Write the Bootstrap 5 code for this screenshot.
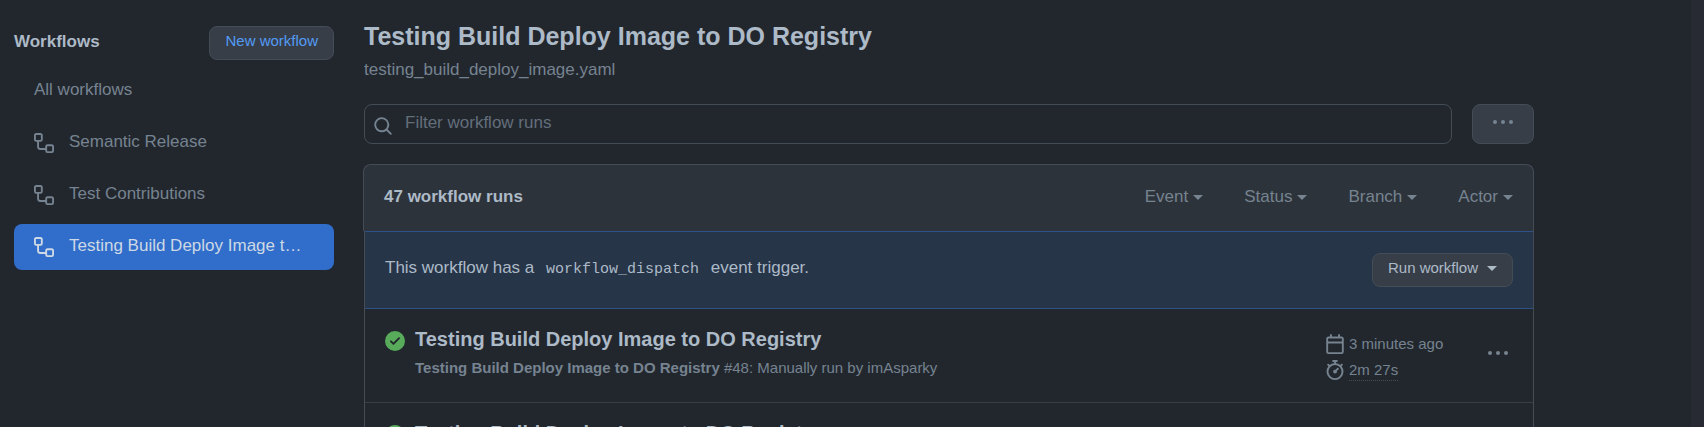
<!DOCTYPE html>
<html lang="en">
<head>
<meta charset="utf-8">
<meta name="viewport" content="width=device-width, initial-scale=1">
<title>Workflow runs</title>
<link href="https://cdn.jsdelivr.net/npm/bootstrap@5.3.0/dist/css/bootstrap.min.css" rel="stylesheet">
<style>
  :root { --canvas:#22272e; --fg:#adbac7; --muted:#768390; --line:#444c56; --raised:#373e47; }
  body { background:var(--canvas); color:var(--fg); font:17px/24px "Liberation Sans", Arial, sans-serif; }
  a { text-decoration:none; color:inherit; }
  svg { fill:currentColor; flex:none; display:block; }
  .page-shell { height:100vh; overflow:hidden; border-right:13px solid #272a32; padding-left:14px; gap:30px; }
  .side { width:320px; flex:none; padding-top:26px; }
  .side h2, .runs-head h2 { font-size:17px; line-height:24px; font-weight:700; margin:0; }
  .gh-btn { --bs-btn-bg:var(--raised); --bs-btn-border-color:var(--line); --bs-btn-color:var(--fg);
    --bs-btn-hover-bg:#444c56; --bs-btn-hover-color:var(--fg); --bs-btn-hover-border-color:#768390;
    --bs-btn-font-size:15px; --bs-btn-line-height:24px; --bs-btn-border-radius:8px;
    --bs-btn-padding-x:15px; padding-top:2px; padding-bottom:6px; }
  .gh-btn.new { --bs-btn-color:#539bf5; }
  .flow-nav { gap:6px; margin-top:8px; }
  .flow-nav .nav-link { color:var(--muted); display:flex; align-items:center; gap:15px; height:46px; padding:0 24px 0 20px; border-radius:8px; }
  .flow-nav .nav-link span { padding-bottom:2px; }
  .flow-nav .nav-link.active { background:#316dca; color:#cdd9e5; }
  .main-col { padding:21px 157px 0 0; min-width:0; }
  h1 { font-size:25px; line-height:30px; font-weight:700; margin:0; }
  .file { color:var(--muted); line-height:24px; margin-top:7px; }
  .tools { gap:20px; margin-top:22px; }
  .search-box { height:40px; border:1px solid var(--line); border-radius:8px; padding:0 10px 0 8px; gap:12px; }
  .search-box svg { color:var(--muted); margin-top:4px; }
  .search-box input { background:none; border:0; padding:0 0 2px; color:var(--fg); font-size:17px; line-height:24px; box-shadow:none; }
  .search-box input:focus { background:none; color:var(--fg); box-shadow:none; }
  .search-box input::placeholder { color:#636e7b; }
  .gh-btn.more { width:62px; height:40px; padding:0 0 4px; color:var(--muted); display:flex; align-items:center; justify-content:center; }
  .runs { margin-top:20px; }
  .runs-head { background:#2d333b; border:1px solid var(--line); border-bottom:0; border-radius:8px 8px 0 0; margin-left:-1px; height:67px; padding:0 20px; }
  .runs-head h2, .filters { padding-bottom:3px; }
  .filters { gap:41px; }
  .filters button { background:none; border:0; padding:0; color:var(--muted); }
  .caret::after { content:""; display:inline-block; margin-left:5px; vertical-align:2px; border:5px solid transparent; border-top-color:currentColor; border-bottom:0; }
  .gh-btn.caret::after { margin-left:9px; }
  .runs-body { border:1px solid var(--line); border-top:0; }
  .dispatch { background:#263548; border:solid #2e5288; border-width:1px 0; height:78px; padding:0 20px; }
  .dispatch p { margin:0; padding-bottom:2px; }
  .dispatch code { font:15px/24px "Liberation Mono", monospace; color:inherit; padding:0 7px; }
  .run { height:93px; padding:18px 21px 0 20px; }
  .run + .run { border-top:1px solid var(--raised); height:94px; }
  .run h3 { font-size:20px; line-height:24px; font-weight:700; margin:0; }
  .run .desc, .run .meta { font-size:15px; color:var(--muted); }
  .run .desc { margin-top:5px; }
  .run .ok { color:#57ab5a; margin:4px 10px 0 0; }
  .meta { width:163px; gap:6px; padding-top:7px; }
  .meta div { gap:4px; height:20px; }
  .meta span, .meta .took { line-height:20px; }
  .meta .took { border-bottom:1px dotted #444c56; }
  .run .kebab { background:none; border:0; padding:16px 4px 0 0; color:var(--muted); height:36px; }
</style>
<script src="https://cdn.jsdelivr.net/npm/bootstrap@5.3.0/dist/js/bootstrap.bundle.min.js"></script>
</head>
<body>
<svg width="0" height="0" class="position-absolute" aria-hidden="true">
  <symbol id="flow" viewBox="0 0 16 16"><path d="M0 1.75C0 .784.784 0 1.75 0h3.5C6.216 0 7 .784 7 1.75v3.5A1.75 1.75 0 0 1 5.25 7H4v4a1 1 0 0 0 1 1h4v-1.25C9 9.784 9.784 9 10.75 9h3.5c.966 0 1.75.784 1.75 1.75v3.5A1.75 1.75 0 0 1 14.25 16h-3.5A1.75 1.75 0 0 1 9 14.25v-.75H5A2.5 2.5 0 0 1 2.5 11V7h-.75A1.75 1.75 0 0 1 0 5.25Zm1.75-.25a.25.25 0 0 0-.25.25v3.5c0 .138.112.25.25.25h3.5a.25.25 0 0 0 .25-.25v-3.5a.25.25 0 0 0-.25-.25Zm9 9a.25.25 0 0 0-.25.25v3.5c0 .138.112.25.25.25h3.5a.25.25 0 0 0 .25-.25v-3.5a.25.25 0 0 0-.25-.25Z"/></symbol>
  <symbol id="cal" viewBox="0 0 16 16"><path d="M4.75 0a.75.75 0 0 1 .75.75V2h5V.75a.75.75 0 0 1 1.5 0V2h1.25c.966 0 1.75.784 1.75 1.75v10.5A1.75 1.75 0 0 1 13.25 16H2.75A1.75 1.75 0 0 1 1 14.25V3.75C1 2.784 1.784 2 2.75 2H4V.75A.75.75 0 0 1 4.75 0ZM2.5 7.5v6.75c0 .138.112.25.25.25h10.5a.25.25 0 0 0 .25-.25V7.5Zm10.75-4H2.75a.25.25 0 0 0-.25.25V6h11V3.75a.25.25 0 0 0-.25-.25Z"/></symbol>
  <symbol id="watch" viewBox="0 0 16 16"><path d="M5.75.75A.75.75 0 0 1 6.5 0h3a.75.75 0 0 1 0 1.5h-.75v1l-.001.041a6.724 6.724 0 0 1 3.464 1.435l.007-.006.75-.75a.749.749 0 0 1 1.275.326.749.749 0 0 1-.215.734l-.75.75-.006.007a6.75 6.75 0 1 1-10.548 0L2.72 5.03l-.75-.75a.751.751 0 0 1 .018-1.042.751.751 0 0 1 1.042-.018l.75.75.007.006A6.72 6.72 0 0 1 7.25 2.541V1.5H6.5a.75.75 0 0 1-.75-.75ZM8 14.5a5.25 5.25 0 1 0-.001-10.501A5.25 5.25 0 0 0 8 14.5Zm.389-6.7 1.33-1.33a.75.75 0 1 1 1.061 1.06L9.45 8.861A1.503 1.503 0 0 1 8 10.75a1.499 1.499 0 1 1 .389-2.95Z"/></symbol>
  <symbol id="check" viewBox="0 0 16 16"><path d="M8 16A8 8 0 1 1 8 0a8 8 0 0 1 0 16Zm3.78-9.72a.751.751 0 0 0-.018-1.042.751.751 0 0 0-1.042-.018L6.75 9.19 5.28 7.72a.751.751 0 0 0-1.042.018.751.751 0 0 0-.018 1.042l2 2a.75.75 0 0 0 1.06 0Z"/></symbol>
  <symbol id="find" viewBox="0 0 16 16"><path d="M10.68 11.74a6 6 0 0 1-7.922-8.982 6 6 0 0 1 8.982 7.922l3.04 3.04a.749.749 0 0 1-.326 1.275.749.749 0 0 1-.734-.215ZM11.5 7a4.499 4.499 0 1 0-8.997 0A4.499 4.499 0 0 0 11.5 7Z"/></symbol>
  <symbol id="dots" viewBox="0 0 20 20"><circle cx="2" cy="10" r="2"/><circle cx="10" cy="10" r="2"/><circle cx="18" cy="10" r="2"/></symbol>
</svg>
<div class="page-shell d-flex">
  <aside class="side">
    <div class="d-flex justify-content-between align-items-start">
      <h2 class="pt-1">Workflows</h2>
      <a href="#" class="btn gh-btn new">New workflow</a>
    </div>
    <nav class="nav flex-column flex-nowrap flow-nav" aria-label="Workflows">
      <a class="nav-link" href="#"><span>All workflows</span></a>
      <a class="nav-link" href="#"><svg width="20" height="20"><use href="#flow"/></svg><span class="text-truncate">Semantic Release</span></a>
      <a class="nav-link" href="#"><svg width="20" height="20"><use href="#flow"/></svg><span class="text-truncate">Test Contributions</span></a>
      <a class="nav-link active" href="#" aria-current="page"><svg width="20" height="20"><use href="#flow"/></svg><span class="text-truncate">Testing Build Deploy Image to DO Registry</span></a>
    </nav>
  </aside>
  <main class="main-col flex-grow-1">
    <h1>Testing Build Deploy Image to DO Registry</h1>
    <div class="file"><a href="#">testing_build_deploy_image.yaml</a></div>
    <div class="tools d-flex">
      <label class="search-box d-flex align-items-center flex-grow-1">
        <svg width="20" height="20" aria-hidden="true"><use href="#find"/></svg>
        <input type="text" class="form-control" placeholder="Filter workflow runs" aria-label="Filter workflow runs">
      </label>
      <button type="button" class="btn gh-btn more" aria-label="More options"><svg width="20" height="20"><use href="#dots"/></svg></button>
    </div>
    <section class="runs">
      <div class="runs-head d-flex align-items-center justify-content-between">
        <h2>47 workflow runs</h2>
        <div class="filters d-flex">
          <button type="button" class="caret">Event</button>
          <button type="button" class="caret">Status</button>
          <button type="button" class="caret">Branch</button>
          <button type="button" class="caret">Actor</button>
        </div>
      </div>
      <div class="runs-body">
        <div class="dispatch d-flex align-items-center justify-content-between">
          <p>This workflow has a <code>workflow_dispatch</code> event trigger.</p>
          <button type="button" class="btn gh-btn caret">Run workflow</button>
        </div>
        <article class="run d-flex align-items-start">
          <svg class="ok" width="20" height="20" aria-hidden="true"><use href="#check"/></svg>
          <div class="flex-grow-1">
            <h3><a href="#">Testing Build Deploy Image to DO Registry</a></h3>
            <div class="desc"><b>Testing Build Deploy Image to DO Registry</b> #48: Manually run by <a href="#">imAsparky</a></div>
          </div>
          <div class="meta d-flex flex-column">
            <div class="d-flex align-items-start"><svg width="20" height="20"><use href="#cal"/></svg><span>3 minutes ago</span></div>
            <div class="d-flex align-items-start"><svg width="20" height="20"><use href="#watch"/></svg><a href="#" class="took">2m 27s</a></div>
          </div>
          <button type="button" class="kebab" aria-label="Run options"><svg width="20" height="20"><use href="#dots"/></svg></button>
        </article>
        <article class="run d-flex align-items-start">
          <svg class="ok" width="20" height="20" aria-hidden="true"><use href="#check"/></svg>
          <div class="flex-grow-1">
            <h3><a href="#">Testing Build Deploy Image to DO Registry</a></h3>
          </div>
        </article>
      </div>
    </section>
  </main>
</div>
</body>
</html>
